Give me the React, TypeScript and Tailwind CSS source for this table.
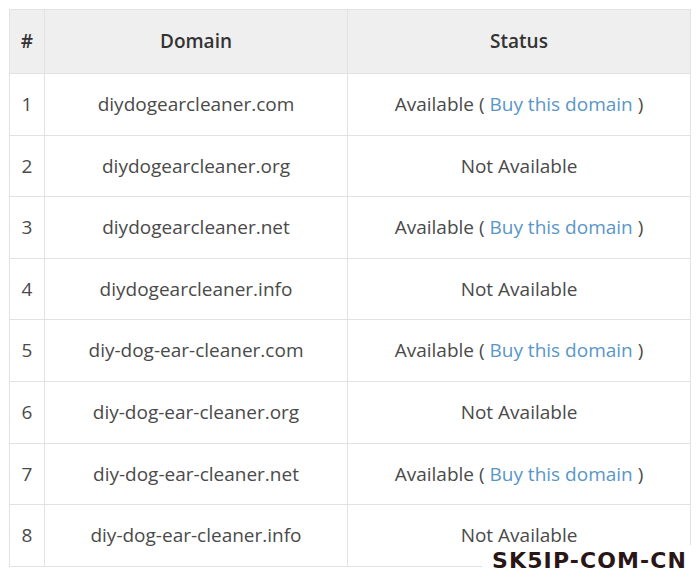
import React from "react";

const rows = [
  { n: 1, domain: "diydogearcleaner.com", available: true },
  { n: 2, domain: "diydogearcleaner.org", available: false },
  { n: 3, domain: "diydogearcleaner.net", available: true },
  { n: 4, domain: "diydogearcleaner.info", available: false },
  { n: 5, domain: "diy-dog-ear-cleaner.com", available: true },
  { n: 6, domain: "diy-dog-ear-cleaner.org", available: false },
  { n: 7, domain: "diy-dog-ear-cleaner.net", available: true },
  { n: 8, domain: "diy-dog-ear-cleaner.info", available: false },
];

export default function App() {
  return (
    <div className="w-[700px] h-[580px] bg-white relative overflow-hidden font-['Open_Sans',sans-serif] text-[#4a4a4a]">
      <div className="pt-[9px] pl-[9px]">
        <table className="w-[682px] border-collapse border border-[#e2e2e2] text-[19px]">
          <thead>
            <tr className="bg-[#efefef] h-[64px]">
              <th className="w-[35px] border border-[#e2e2e2] font-semibold text-[#333]">#</th>
              <th className="w-[303px] border border-[#e2e2e2] font-semibold text-[#333]">Domain</th>
              <th className="border border-[#e2e2e2] font-semibold text-[#333]">Status</th>
            </tr>
          </thead>
          <tbody>
            {rows.map((r) => (
              <tr key={r.n} className="h-[61.6px]">
                <td className="border border-[#e2e2e2] text-center">{r.n}</td>
                <td className="border border-[#e2e2e2] text-center">{r.domain}</td>
                <td className="border border-[#e2e2e2] text-center">
                  {r.available ? (
                    <>
                      Available ( <a href="#" className="text-[#5996c8]">Buy this domain</a> )
                    </>
                  ) : (
                    "Not Available"
                  )}
                </td>
              </tr>
            ))}
          </tbody>
        </table>
      </div>
      <div className="absolute left-[482px] top-[545px] w-[218px] h-[35px] bg-white flex items-center justify-end pr-[13px] pb-[3px]">
        <span className="whitespace-nowrap font-['DejaVu_Sans',sans-serif] font-bold text-[22px] leading-none tracking-[1.1px] text-[#2a1616]">
          SK5IP-COM-CN
        </span>
      </div>
    </div>
  );
}
